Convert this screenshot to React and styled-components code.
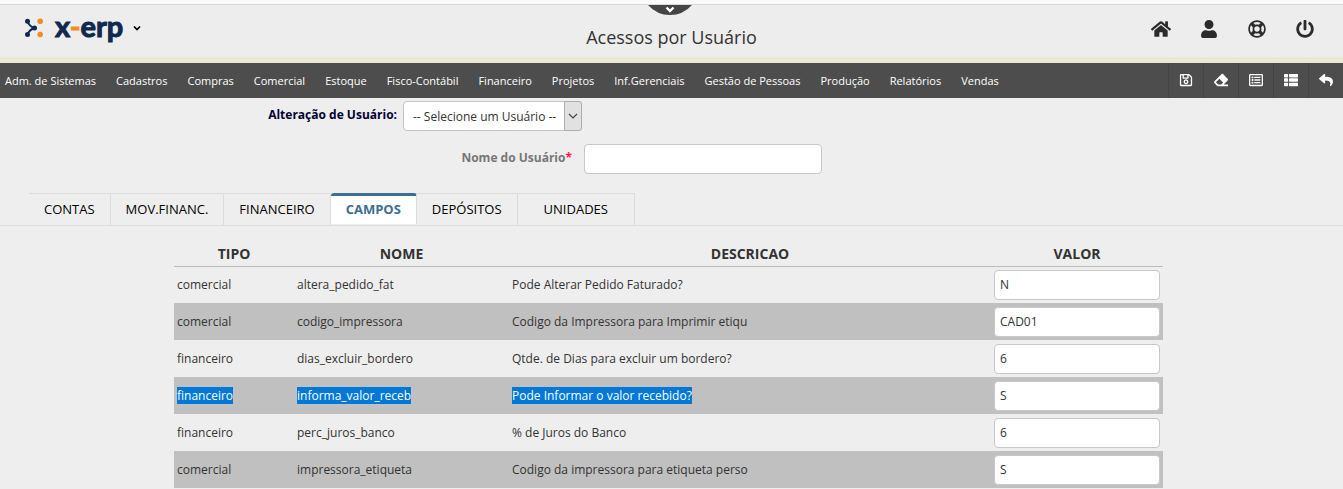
import React from 'react';
import styled, { createGlobalStyle } from 'styled-components';
import {
  FaHome,
  FaUser,
  FaRegLifeRing,
  FaPowerOff,
  FaRegSave,
  FaEraser,
  FaRegListAlt,
  FaThList,
  FaReply
} from 'react-icons/fa';

const GlobalStyle = createGlobalStyle`
  * {
    box-sizing: border-box;
  }
  body {
    margin: 0;
    background-color: #eeeeee;
    color: #333;
    font-family: 'Open Sans', 'Noto Sans', sans-serif;
    font-size: 12px;
    overflow: hidden;
  }
  button, input, select {
    font-family: inherit;
  }
`;

const Header = styled.header`
  position: relative;
  display: grid;
  grid-template-columns: 1fr auto 1fr;
  height: 63px;
  background-color: #ededed;
  border-top: 4px solid #fafafa;
  border-bottom: 6px solid #e9e9d3;
  box-shadow: inset 0 1px 0 #d8d8d8;
`;

const LogoLink = styled.a`
  display: flex;
  align-items: center;
  justify-self: start;
  height: 48px;
  padding-left: 24px;
  color: #10294f;
  text-decoration: none;
`;

const Brand = styled.span`
  margin: 0 10px 0 11px;
  padding-bottom: 4px;
  font-family: Lato, sans-serif;
  font-size: 29px;
  line-height: 32px;
  font-weight: 700;
  -webkit-text-stroke: 1px #10294f;
`;

const Dash = styled.span`
  color: #f28c1e;
  -webkit-text-stroke: 1px #f28c1e;
`;

const Title = styled.h1`
  margin: 20px 0 0;
  font-size: 18px;
  line-height: 26px;
  font-weight: 400;
`;

const PullDown = styled.button`
  position: absolute;
  top: 1px;
  left: 50%;
  margin-left: -24px;
  padding: 0;
  border: 0;
  background: none;
  svg {
    display: block;
  }
`;

const UserActions = styled.div`
  display: flex;
  justify-content: flex-end;
  align-items: center;
  gap: 28px;
  height: 50px;
  padding-right: 28px;
`;

const IconButton = styled.button`
  display: flex;
  justify-content: center;
  width: 20px;
  padding: 0;
  border: 0;
  background: none;
  color: #2b2b2b;
  font-size: ${({ $size }) => $size || 18}px;
`;

const NavBar = styled.nav`
  display: flex;
  justify-content: space-between;
  height: 35px;
  background-color: #4d4d4d;
`;

const Menu = styled.div`
  display: flex;
  align-items: center;
  gap: 20px;
  padding-left: 5px;
`;

const MenuLink = styled.a`
  color: white;
  font-size: 11px;
  text-decoration: none;
  white-space: nowrap;
`;

const Tools = styled.div`
  display: flex;
`;

const ToolButton = styled.button`
  display: flex;
  align-items: center;
  justify-content: center;
  width: 35px;
  padding: 0 0 2px;
  border: 0;
  border-left: 1px solid #444;
  background: none;
  color: white;
  font-size: 14px;
`;

const Form = styled.form`
  display: flex;
  flex-direction: column;
  gap: 13px;
  padding-top: 3px;
`;

const Field = styled.div`
  display: flex;
  gap: ${({ $gap }) => $gap}px;
`;

const Label = styled.label`
  width: ${({ $width }) => $width}px;
  padding-top: 5px;
  color: ${({ $muted }) => ($muted ? '#777' : '#000033')};
  font-size: 12px;
  line-height: 18px;
  font-weight: 700;
  text-align: right;
`;

const Required = styled.span`
  color: #ff1a40;
`;

const SelectBox = styled.div`
  position: relative;
  width: 179px;
`;

const Select = styled.select`
  appearance: none;
  width: 100%;
  height: 30px;
  padding: 0 20px 0 9px;
  border: 1px solid #c4c4c4;
  border-radius: 4px;
  background-color: white;
  color: #333;
  font-size: 12px;
`;

const SelectArrow = styled.span`
  position: absolute;
  top: 0;
  right: 0;
  display: flex;
  align-items: center;
  justify-content: center;
  width: 18px;
  height: 30px;
  border: 1px solid #adadad;
  border-radius: 0 3px 3px 0;
  background-color: #e1e1e1;
  pointer-events: none;
`;

const TextInput = styled.input`
  display: block;
  width: ${({ $width }) => $width || '100%'};
  height: 30px;
  padding: 0 5px;
  border: 1px solid #c8c8c8;
  border-radius: 4px;
  background-color: white;
  color: #333;
  font-size: 12px;
`;

const Tabs = styled.div`
  display: flex;
  height: 33px;
  margin-top: 19px;
  padding-left: 29px;
  border-bottom: 1px solid #dcdcdc;
`;

const Tab = styled.button`
  height: ${({ $active }) => ($active ? 31 : 32)}px;
  padding: 0 ${({ $wide }) => ($wide ? 26 : 15)}px 2px;
  border: 0;
  border-top: ${({ $active }) => ($active ? '3px solid #3c6e91' : '1px solid #dcdcdc')};
  border-right: 1px solid #dcdcdc;
  border-radius: ${({ $active }) => ($active ? '3px 3px 0 0' : '0')};
  background-color: ${({ $active }) => ($active ? 'white' : 'transparent')};
  color: ${({ $active }) => ($active ? '#3c6e91' : '#000')};
  font-size: 13px;
  font-weight: ${({ $active }) => ($active ? 700 : 400)};
`;

const TableArea = styled.main`
  padding: 16px 180px 0 174px;
`;

const Table = styled.table`
  width: 100%;
  table-layout: fixed;
  border-collapse: collapse;
`;

const HeadCell = styled.th`
  width: ${({ $width }) => $width || 'auto'};
  height: 24px;
  padding: 0;
  border-bottom: 1px solid #bbb;
  font-size: 14px;
  line-height: 18px;
  font-weight: 700;
`;

const Row = styled.tr`
  &:nth-child(even) {
    background-color: #c0c0c0;
  }
`;

const Cell = styled.td`
  height: 37px;
  padding: 0 3px;
`;

const Text = styled.span`
  color: ${({ $selected }) => ($selected ? 'white' : '#333')};
  background-color: ${({ $selected }) => ($selected ? '#0078d7' : 'transparent')};
`;

const menu = [
  'Adm. de Sistemas',
  'Cadastros',
  'Compras',
  'Comercial',
  'Estoque',
  'Fisco-Contábil',
  'Financeiro',
  'Projetos',
  'Inf.Gerenciais',
  'Gestão de Pessoas',
  'Produção',
  'Relatórios',
  'Vendas'
];

const tools = [
  { label: 'Salvar', icon: FaRegSave },
  { label: 'Limpar', icon: FaEraser },
  { label: 'Consultar', icon: FaRegListAlt },
  { label: 'Listar', icon: FaThList },
  { label: 'Voltar', icon: FaReply }
];

const tabs = ['CONTAS', 'MOV.FINANC.', 'FINANCEIRO', 'CAMPOS', 'DEPÓSITOS', 'UNIDADES'];

const campos = [
  { tipo: 'comercial', nome: 'altera_pedido_fat', descricao: 'Pode Alterar Pedido Faturado?', valor: 'N' },
  { tipo: 'comercial', nome: 'codigo_impressora', descricao: 'Codigo da Impressora para Imprimir etiqu', valor: 'CAD01' },
  { tipo: 'financeiro', nome: 'dias_excluir_bordero', descricao: 'Qtde. de Dias para excluir um bordero?', valor: '6' },
  { tipo: 'financeiro', nome: 'informa_valor_receb', descricao: 'Pode Informar o valor recebido?', valor: 'S', selected: true },
  { tipo: 'financeiro', nome: 'perc_juros_banco', descricao: '% de Juros do Banco', valor: '6' },
  { tipo: 'comercial', nome: 'impressora_etiqueta', descricao: 'Codigo da impressora para etiqueta perso', valor: 'S' }
];

const LogoMark = () => (
  <svg width="20" height="20" viewBox="0 0 20 20" aria-hidden="true">
    <path d="M3.5 3.2 Q5 7.800 10 10 Q5 12.200 3.500 16.500" fill="none" stroke="#10294f" strokeWidth="2" />
    <circle cx="3.500" cy="3.200" r="2.500" fill="#10294f" />
    <circle cx="3.500" cy="16.500" r="2.500" fill="#10294f" />
    <circle cx="10.500" cy="10" r="2.500" fill="#10294f" />
    <circle cx="16.200" cy="3.200" r="2.800" fill="#f28c1e" />
    <circle cx="16.200" cy="16.500" r="2.800" fill="#f28c1e" />
  </svg>
);

const App = () => (
  <>
    <GlobalStyle />
    <Header>
      <LogoLink href="#inicio">
        <LogoMark />
        <Brand>x<Dash>-</Dash>erp</Brand>
        <svg width="8" height="6" viewBox="0 0 8 6" aria-hidden="true">
          <path d="M1 1.500 L4 4.500 L7 1.500" fill="none" stroke="#000" strokeWidth="1.700" />
        </svg>
      </LogoLink>
      <Title>Acessos por Usuário</Title>
      <UserActions>
        <IconButton aria-label="Início" $size={20}><FaHome /></IconButton>
        <IconButton aria-label="Usuário"><FaUser /></IconButton>
        <IconButton aria-label="Ajuda"><FaRegLifeRing /></IconButton>
        <IconButton aria-label="Sair"><FaPowerOff /></IconButton>
      </UserActions>
      <PullDown aria-label="Expandir">
        <svg width="44" height="10" viewBox="0 0 44 10">
          <path d="M0 0 H44 Q35 10 22 10 Q9 10 0 0 Z" fill="#444" />
          <path d="M18.500 2.500 L22 6 L25.500 2.500" fill="none" stroke="#fff" strokeWidth="2.400" />
        </svg>
      </PullDown>
    </Header>
    <NavBar>
      <Menu>
        {menu.map((item) => (
          <MenuLink key={item} href="#menu">{item}</MenuLink>
        ))}
      </Menu>
      <Tools>
        {tools.map(({ label, icon: Icon }) => (
          <ToolButton key={label} aria-label={label}><Icon /></ToolButton>
        ))}
      </Tools>
    </NavBar>
    <Form>
      <Field $gap={6}>
        <Label htmlFor="usuario" $width={397}>Alteração de Usuário:</Label>
        <SelectBox>
          <Select id="usuario">
            <option>-- Selecione um Usuário --</option>
          </Select>
          <SelectArrow>
            <svg width="10" height="6" viewBox="0 0 10 6" aria-hidden="true">
              <path d="M1 1 L5 5 L9 1" fill="none" stroke="#444" strokeWidth="1.200" />
            </svg>
          </SelectArrow>
        </SelectBox>
      </Field>
      <Field $gap={12}>
        <Label htmlFor="nome" $width={572} $muted>
          Nome do Usuário<Required>*</Required>
        </Label>
        <TextInput id="nome" type="text" $width="238px" />
      </Field>
    </Form>
    <Tabs role="tablist">
      {tabs.map((tab) => (
        <Tab
          key={tab}
          role="tab"
          aria-selected={tab === 'CAMPOS'}
          $active={tab === 'CAMPOS'}
          $wide={tab === 'UNIDADES'}
        >
          {tab}
        </Tab>
      ))}
    </Tabs>
    <TableArea>
      <Table>
        <thead>
          <tr>
            <HeadCell $width="120px">TIPO</HeadCell>
            <HeadCell $width="215px">NOME</HeadCell>
            <HeadCell>DESCRICAO</HeadCell>
            <HeadCell $width="172px">VALOR</HeadCell>
          </tr>
        </thead>
        <tbody>
          {campos.map(({ tipo, nome, descricao, valor, selected }) => (
            <Row key={nome}>
              <Cell><Text $selected={selected}>{tipo}</Text></Cell>
              <Cell><Text $selected={selected}>{nome}</Text></Cell>
              <Cell><Text $selected={selected}>{descricao}</Text></Cell>
              <Cell><TextInput type="text" aria-label={nome} defaultValue={valor} /></Cell>
            </Row>
          ))}
        </tbody>
      </Table>
    </TableArea>
  </>
);

export default App;
